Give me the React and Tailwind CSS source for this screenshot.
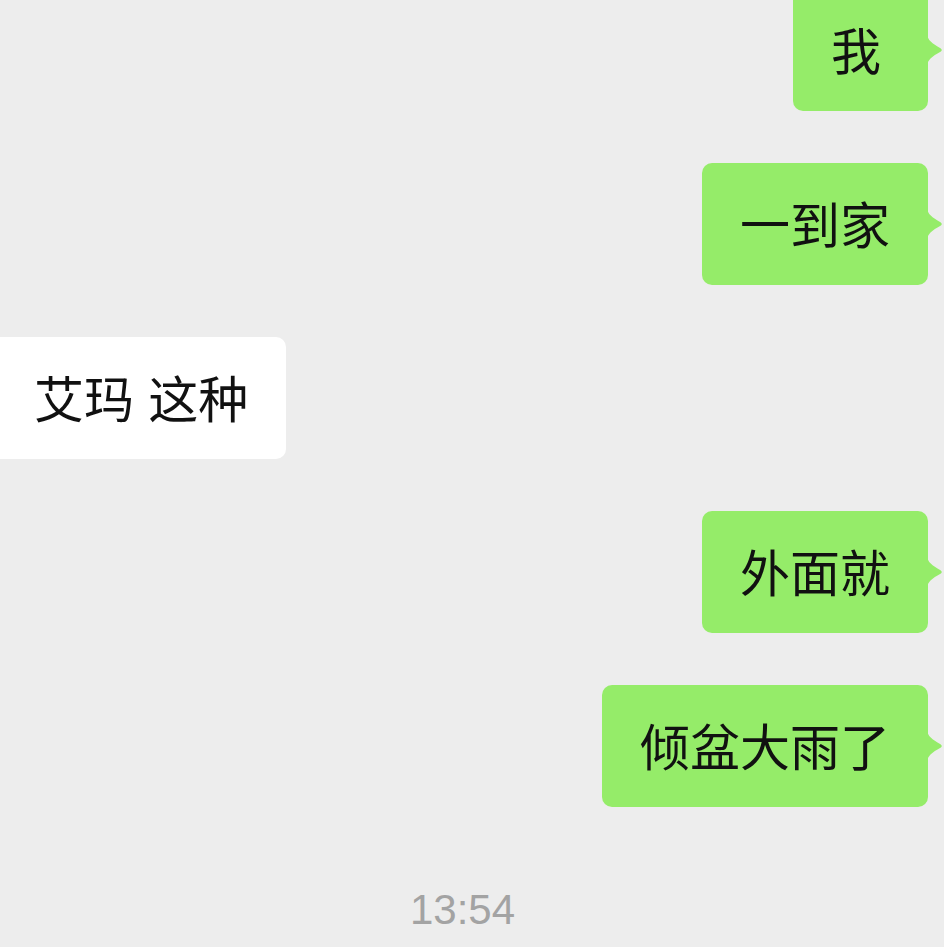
import React from 'react';

const messages = [
  { id: 1, from: 'me', text: '我' },
  { id: 2, from: 'me', text: '一到家' },
  { id: 3, from: 'other', text: '艾玛 这种' },
  { id: 4, from: 'me', text: '外面就' },
  { id: 5, from: 'me', text: '倾盆大雨了' },
];

const Tail = () => (
  <svg
    className="absolute left-full top-1/2 -translate-y-1/2 -ml-px"
    width="17"
    height="32"
    viewBox="0 0 17 32"
  >
    <path d="M0 0 C0.5 6 5 9.5 13.5 14.2 Q16 16 13.5 17.8 C5 22.5 0.5 26 0 32 Z" fill="#95ec69" />
  </svg>
);

const Bubble = ({ from, text }) => {
  if (from === 'me') {
    return (
      <div className="flex justify-end pr-[16px]">
        <div className="relative min-w-[135px] bg-[#95ec69] rounded-[10px] px-[38px] pt-[24px] pb-[28px] text-[50px] leading-[70px] text-[#111111] whitespace-nowrap">
          {text}
          <Tail />
        </div>
      </div>
    );
  }
  return (
    <div className="flex justify-start">
      <div className="bg-white rounded-[10px] -ml-[12px] pl-[46px] pr-[38px] pt-[24px] pb-[28px] text-[50px] leading-[70px] text-[#111111] whitespace-nowrap [word-spacing:3px]">
        {text}
      </div>
    </div>
  );
};

export default function App() {
  return (
    <div
      className="w-[944px] h-[947px] overflow-hidden bg-[#ededed]"
      style={{ fontFamily: '"Noto Sans CJK SC", "Noto Sans", sans-serif' }}
    >
      <div className="flex flex-col gap-[52px] -mt-[11px]">
        {messages.map((m) => (
          <Bubble key={m.id} from={m.from} text={m.text} />
        ))}
      </div>
      <div className="flex justify-center pr-[19px] mt-[82px]">
        <span className="font-['Liberation_Sans',Arial,sans-serif] text-[42px] leading-[42px] text-[#a3a3a3]">
          13:54
        </span>
      </div>
    </div>
  );
}
